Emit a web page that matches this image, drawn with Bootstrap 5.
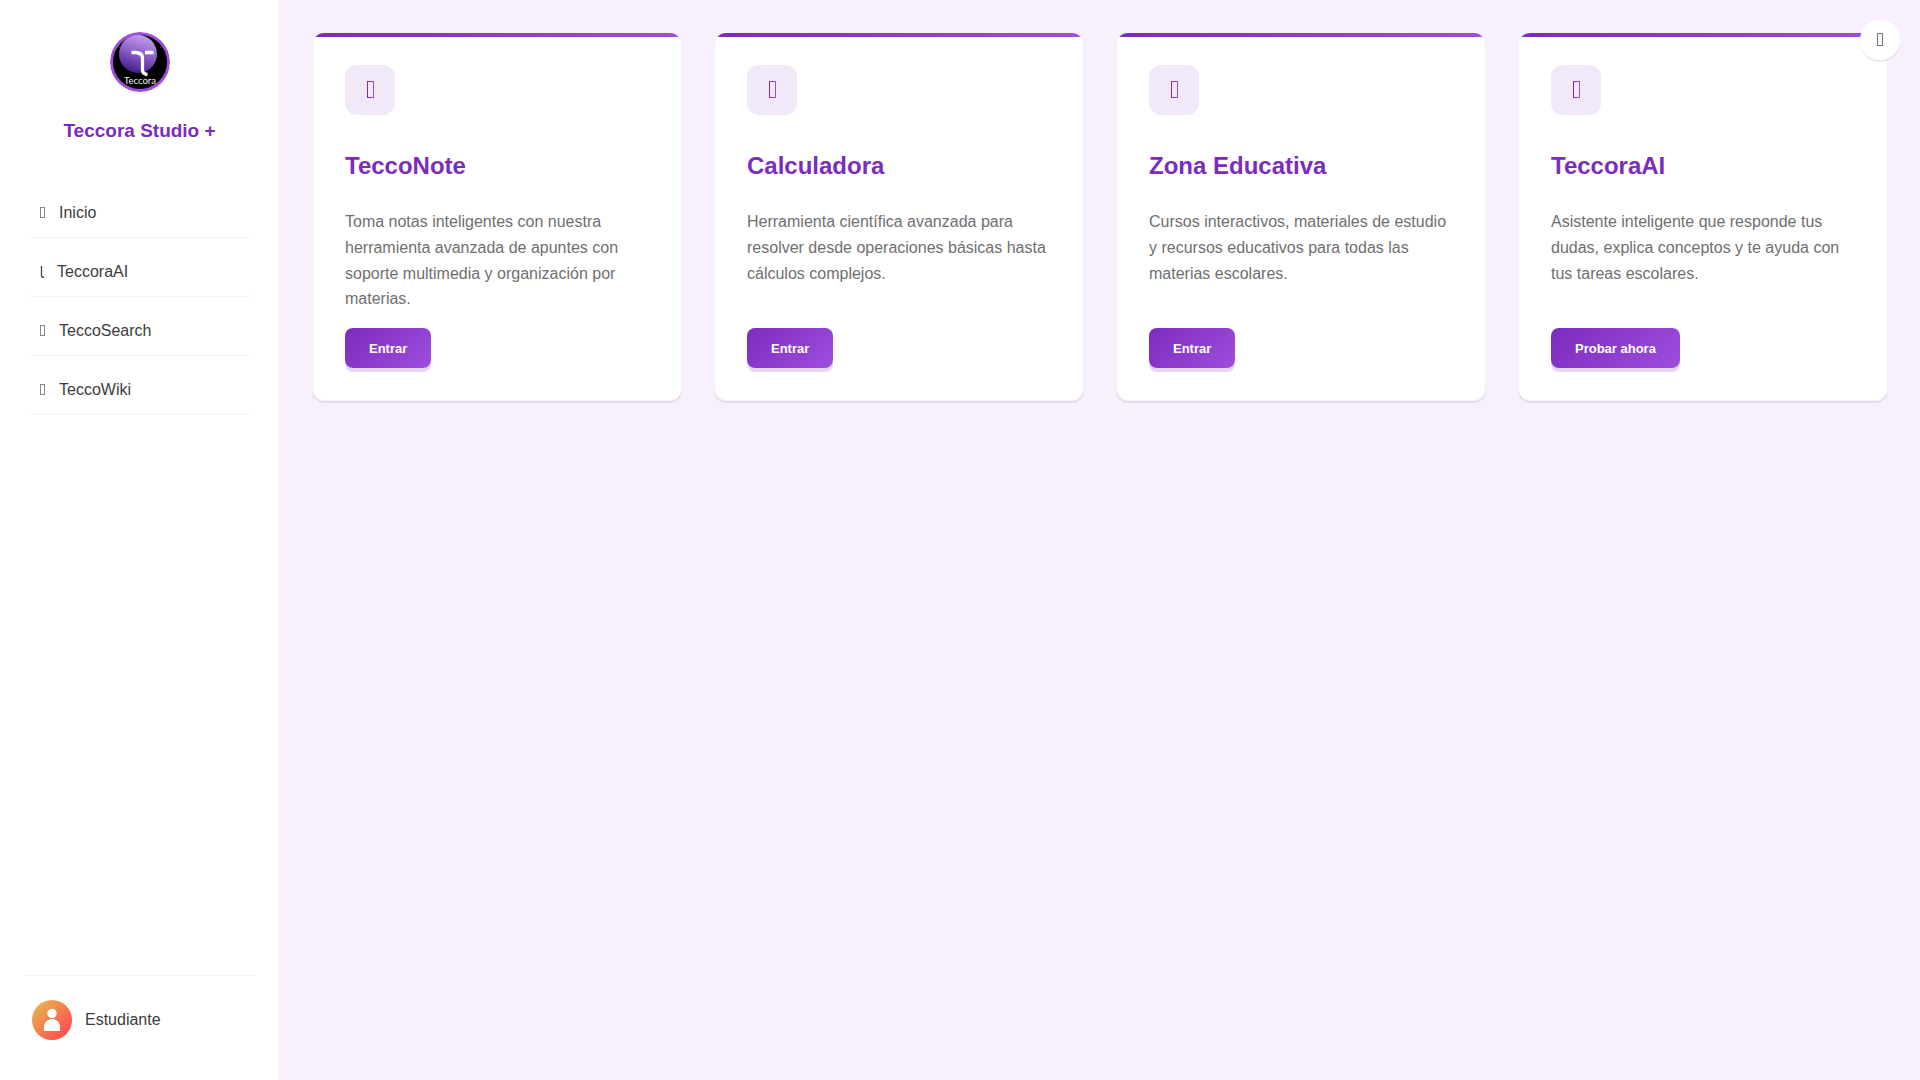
<!DOCTYPE html>
<html lang="es">
<head>
<meta charset="utf-8">
<meta name="viewport" content="width=device-width, initial-scale=1">
<title>Teccora Studio +</title>
<link href="https://cdn.jsdelivr.net/npm/bootstrap@5.3.0/dist/css/bootstrap.min.css" rel="stylesheet">
<style>
  :root { --tec-deep: #7b2cbf; --tec-light: #9d4edd; }
  body { background: #f8f0ff; color: #3c3c3c; font-family: "Liberation Sans", Arial, sans-serif; font-size: 16px; line-height: 1.6; }
  .side-panel { width: 280px; height: 100vh; top: 0; background: #fff; border-right: 1px solid #f2f2f2; padding: 32px 24px 24px; }
  .brand-logo { width: 60px; height: 60px; border-radius: 50%; box-shadow: 0 2px 0 rgba(0,0,0,.06); }
  .brand-name { font-size: 19px; line-height: 30px; color: var(--tec-deep); margin: 24px 0 42px; }
  .side-link { color: #3c3c3c; margin: 0 4px 9px; padding: 12px 12px 11px; gap: 12px; line-height: 26px; border-bottom: 1px solid #f2f2f2; border-radius: 4px; }
  .side-link:hover { color: var(--tec-deep); }
  .user-row { border-top: 1px solid #f2f2f2; padding: 24px 8px 16px; gap: 13px; }
  .tool-area { padding: 32px; }
  .tool-grid { --bs-gutter-x: 32px; --bs-gutter-y: 32px; }
  .tool-card { background: #fff; border: 1px solid #f2f2f2; border-radius: 12px; padding: 32px; box-shadow: 0 2px 0 rgba(0,0,0,.08); overflow: hidden; }
  .tool-card::before { content: ""; position: absolute; top: 0; left: 0; right: 0; height: 4px; background: linear-gradient(90deg, var(--tec-deep), var(--tec-light)); }
  .tool-icon { width: 50px; height: 50px; border-radius: 12px; background: #f1e8f9; margin-bottom: 32px; }
  .tool-title { font-size: 24px; line-height: 1.6; color: var(--tec-deep); margin-bottom: 24px; }
  .tool-text { color: #6f6f6f; margin-bottom: 16px; }
  .btn-tec { font-size: 13px; line-height: 16px; font-weight: 700; color: #fff; padding: 13px 24px 11px; border: 0; border-radius: 8px; background: linear-gradient(135deg, var(--tec-deep), var(--tec-light)); box-shadow: 0 4px 0 rgba(123,44,191,.2); }
  .btn-tec:hover { color: #fff; }
  .theme-btn { top: 20px; right: 20px; width: 40px; height: 40px; padding: 0; border: 0; background: #fff; box-shadow: 0 2px 0 rgba(0,0,0,.08); z-index: 1030; }
  .theme-btn:hover { background: #fff; }
</style>
<script src="https://cdn.jsdelivr.net/npm/bootstrap@5.3.0/dist/js/bootstrap.bundle.min.js"></script>
</head>
<body>
<svg width="0" height="0" class="position-absolute" aria-hidden="true">
  <defs>
    <linearGradient id="tecStroke" x1="0" y1="0" x2="1" y2="0"><stop offset="0" stop-color="#7b2cbf"/><stop offset="1" stop-color="#9d4edd"/></linearGradient>
    <symbol id="navBox" viewBox="0 0 7 12"><rect x=".5" y=".5" width="4" height="10" fill="none" stroke="#888"/></symbol>
    <symbol id="toolBox" viewBox="0 0 8 18"><rect x="1.5" y=".5" width="6" height="16" fill="none" stroke="url(#tecStroke)"/></symbol>
  </defs>
</svg>
<div class="d-flex align-items-start">
  <aside class="side-panel sticky-top d-flex flex-column flex-shrink-0">
    <div class="text-center">
      <svg class="brand-logo d-block mx-auto" viewBox="0 0 60 60" role="img" aria-label="Teccora">
        <defs>
          <linearGradient id="orb" x1=".65" y1="0" x2=".35" y2="1">
            <stop offset="0" stop-color="#c79ff0"/><stop offset=".5" stop-color="#8a5cc4"/><stop offset="1" stop-color="#3f1a8c"/>
          </linearGradient>
        </defs>
        <circle cx="30" cy="30" r="28.5" fill="#000" stroke="#9d4edd" stroke-width="3"/>
        <circle cx="28" cy="22" r="19" fill="url(#orb)"/>
        <path d="M21.500 20.500H26Q32.500 21 32.500 26V38Q32.500 42 37.500 42.500" fill="none" stroke="#fff" stroke-width="3.300"/>
        <path d="M35 20.500H43.500" stroke="#fff" stroke-width="3.300"/>
        <text x="30" y="51.500" text-anchor="middle" font-family="Lato, sans-serif" font-size="9.500" fill="#eee">Teccora</text>
      </svg>
      <h1 class="brand-name fw-bold">Teccora Studio +</h1>
    </div>
    <nav class="d-flex flex-column">
      <a class="side-link d-flex align-items-center text-decoration-none" href="#"><svg width="7" height="12" aria-hidden="true"><use href="#navBox"/></svg><span>Inicio</span></a>
      <a class="side-link d-flex align-items-center text-decoration-none" href="#"><svg width="5" height="14" viewBox="0 0 5 14" aria-hidden="true"><path d="M1.500 1V10.500Q1.500 12.400 4 12.400" fill="none" stroke="#444" stroke-width="1.300"/></svg><span>TeccoraAI</span></a>
      <a class="side-link d-flex align-items-center text-decoration-none" href="#"><svg width="7" height="12" aria-hidden="true"><use href="#navBox"/></svg><span>TeccoSearch</span></a>
      <a class="side-link d-flex align-items-center text-decoration-none" href="#"><svg width="7" height="12" aria-hidden="true"><use href="#navBox"/></svg><span>TeccoWiki</span></a>
    </nav>
    <div class="user-row d-flex align-items-center mt-auto">
      <svg width="40" height="40" viewBox="0 0 40 40" aria-hidden="true">
        <defs><linearGradient id="avatar" x1="0" y1="0" x2="1" y2="1"><stop offset=".1" stop-color="#e6b450"/><stop offset=".85" stop-color="#ff4f4f"/></linearGradient></defs>
        <circle cx="20" cy="20" r="20" fill="url(#avatar)"/>
        <circle cx="20" cy="13.500" r="4.700" fill="#fff"/>
        <path d="M12 31V27a8 8 0 0 1 16 0V31Z" fill="#fff"/>
      </svg>
      <span>Estudiante</span>
    </div>
  </aside>

  <main class="tool-area flex-grow-1">
    <div class="tool-grid row row-cols-1 row-cols-md-2 row-cols-xl-4 mt-0">
      <div class="col mt-0"><article class="tool-card position-relative d-flex flex-column align-items-start h-100">
        <div class="tool-icon d-flex align-items-center justify-content-center"><svg width="8" height="18" aria-hidden="true"><use href="#toolBox"/></svg></div>
        <h2 class="tool-title fw-bold">TeccoNote</h2>
        <p class="tool-text flex-grow-1">Toma notas inteligentes con nuestra herramienta avanzada de apuntes con soporte multimedia y organización por materias.</p>
        <button type="button" class="btn btn-tec">Entrar</button>
      </article></div>
      <div class="col mt-0"><article class="tool-card position-relative d-flex flex-column align-items-start h-100">
        <div class="tool-icon d-flex align-items-center justify-content-center"><svg width="8" height="18" aria-hidden="true"><use href="#toolBox"/></svg></div>
        <h2 class="tool-title fw-bold">Calculadora</h2>
        <p class="tool-text flex-grow-1">Herramienta científica avanzada para resolver desde operaciones básicas hasta cálculos complejos.</p>
        <button type="button" class="btn btn-tec">Entrar</button>
      </article></div>
      <div class="col mt-0"><article class="tool-card position-relative d-flex flex-column align-items-start h-100">
        <div class="tool-icon d-flex align-items-center justify-content-center"><svg width="8" height="18" aria-hidden="true"><use href="#toolBox"/></svg></div>
        <h2 class="tool-title fw-bold">Zona Educativa</h2>
        <p class="tool-text flex-grow-1">Cursos interactivos, materiales de estudio y recursos educativos para todas las materias escolares.</p>
        <button type="button" class="btn btn-tec">Entrar</button>
      </article></div>
      <div class="col mt-0"><article class="tool-card position-relative d-flex flex-column align-items-start h-100">
        <div class="tool-icon d-flex align-items-center justify-content-center"><svg width="8" height="18" aria-hidden="true"><use href="#toolBox"/></svg></div>
        <h2 class="tool-title fw-bold">TeccoraAI</h2>
        <p class="tool-text flex-grow-1">Asistente inteligente que responde tus dudas, explica conceptos y te ayuda con tus tareas escolares.</p>
        <button type="button" class="btn btn-tec">Probar ahora</button>
      </article></div>
    </div>
  </main>
</div>
<button type="button" class="theme-btn btn rounded-circle position-fixed d-flex align-items-center justify-content-center" aria-label="Cambiar tema"><svg width="6" height="14" viewBox="0 0 6 14" aria-hidden="true"><rect x=".5" y=".5" width="5" height="12" fill="none" stroke="#777"/></svg></button>
</body>
</html>
